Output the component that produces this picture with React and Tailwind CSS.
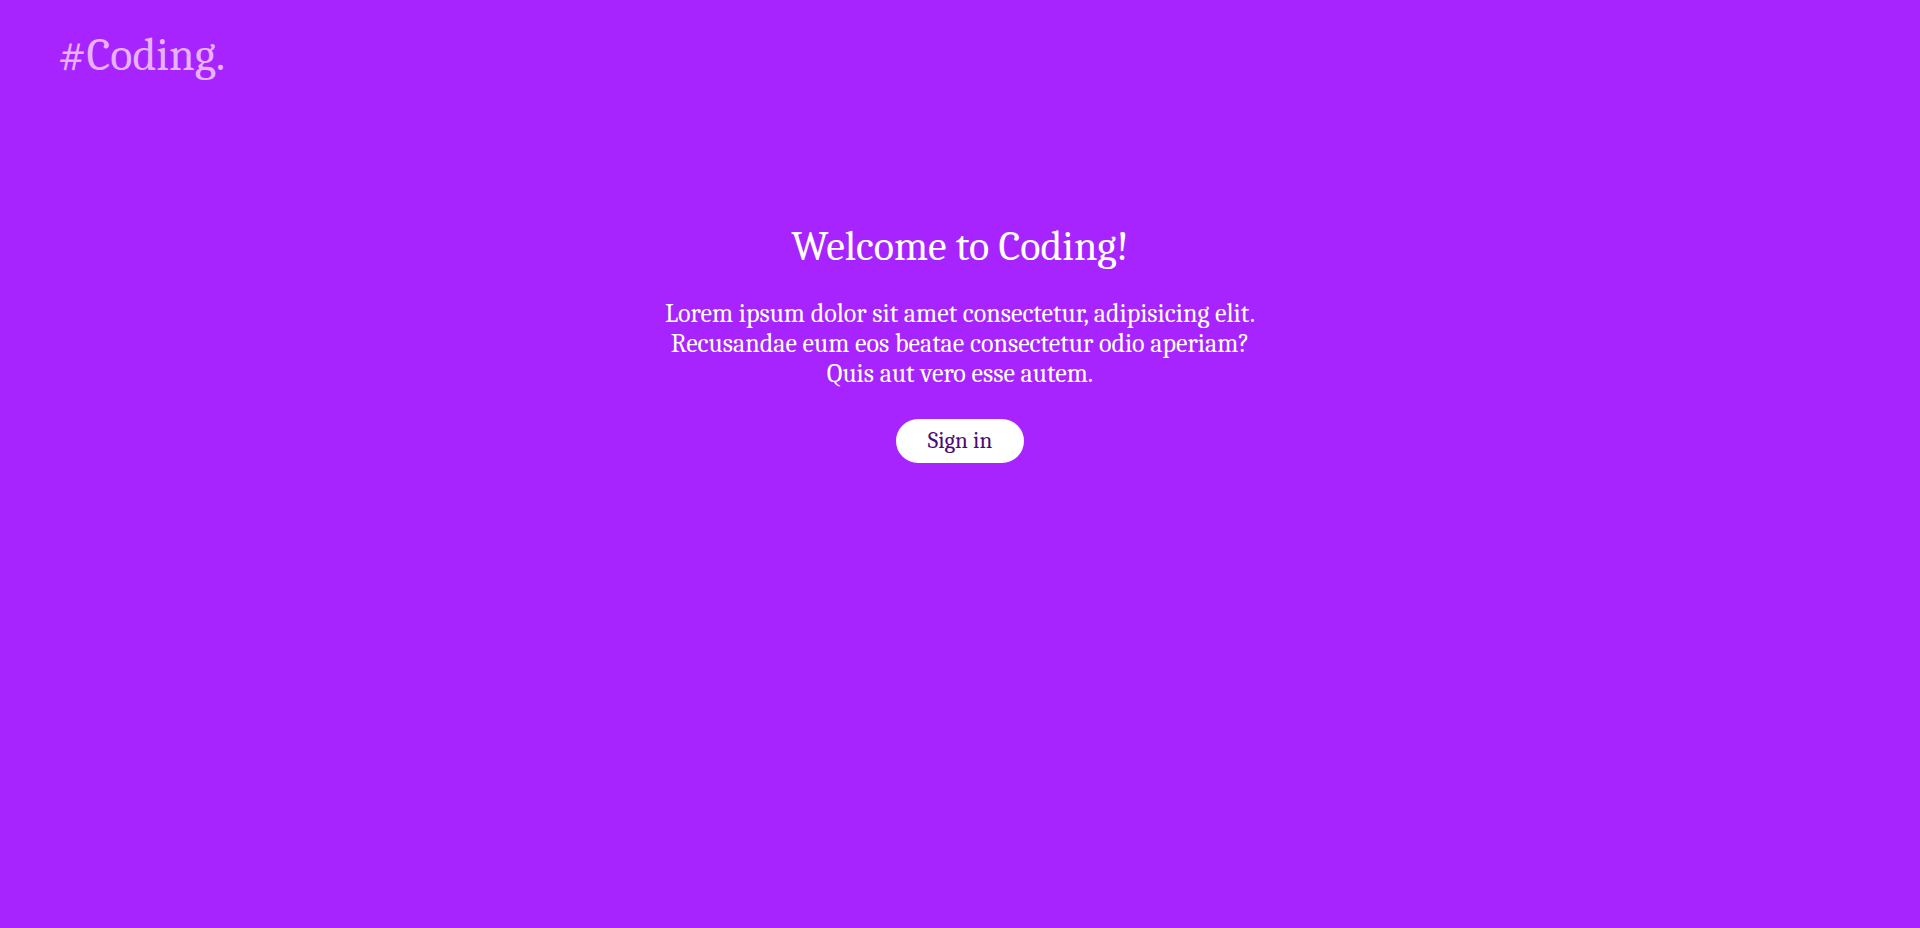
export default function App() {
  return (
    <div className="min-h-[928px] w-full bg-[#a724ff] font-['Cambria','Liberation_Serif',serif]">
      <header className="px-[58px] pt-[29px]">
        <h2 className="text-[46px] leading-[54px] text-[#e6b2fb]">#Coding.</h2>
      </header>
      <main className="flex flex-col items-center pt-[140px] text-center text-white">
        <h1 className="text-[42px] leading-[48px]">Welcome to Coding!</h1>
        <p className="mt-[28px] text-[26px] leading-[30px]">
          Lorem ipsum dolor sit amet consectetur, adipisicing elit.
          <br />
          Recusandae eum eos beatae consectetur odio aperiam?
          <br />
          Quis aut vero esse autem.
        </p>
        <button className="mt-[30px] h-[44px] w-[128px] rounded-full bg-white text-[23px] text-[#4b0b77]">
          Sign in
        </button>
      </main>
    </div>
  );
}
